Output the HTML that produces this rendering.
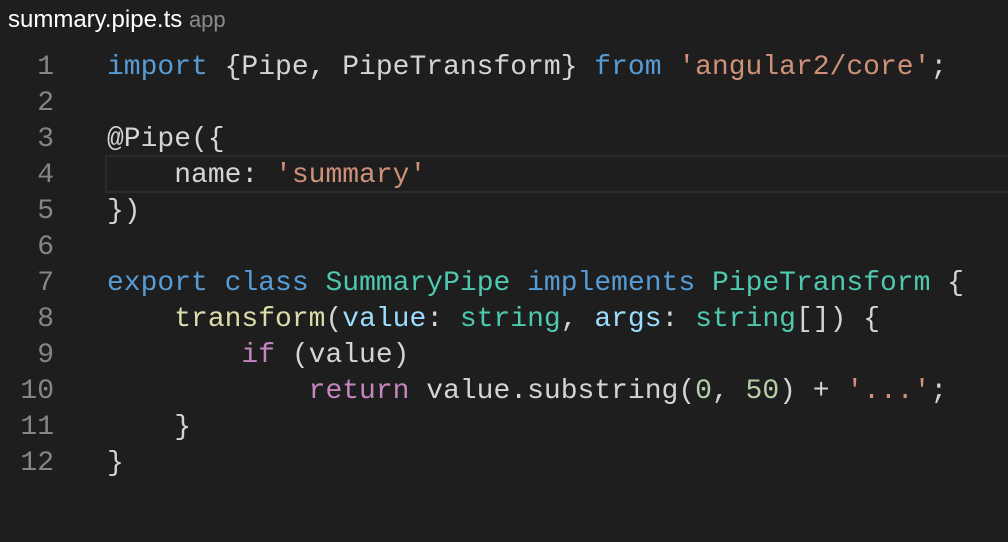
<!DOCTYPE html>
<html><head><style>
body{margin:0;width:1008px;height:542px;background:#1e1e1e;overflow:hidden;position:relative}
.h{position:absolute;left:8px;top:6px;font-family:"Liberation Sans",sans-serif;font-size:24px;color:#fff;white-space:nowrap}
.h span{color:#8a8a8a;font-size:22px}
.hl{position:absolute;left:105px;top:155px;width:910px;height:34px;border:2px solid #2b2b2b}
.code{position:absolute;left:0;top:50px;width:1008px;font-family:"Liberation Mono",monospace;font-size:28px;line-height:36px;color:#d4d4d4}
.l{height:36px;position:relative;white-space:pre}
.n{position:absolute;left:0;width:54px;text-align:right;color:#858585}
.t{position:absolute;left:107px}
.k{color:#569cd6}.s{color:#ce9178}.ty{color:#4ec9b0}.f{color:#dcdcaa}.p{color:#9cdcfe}.c{color:#c586c0}.nu{color:#b5cea8}
</style></head><body>
<div class="h">summary.pipe.ts <span>app</span></div>
<div class="hl"></div>
<div class="code"><div class="l"><span class="n">1</span><span class="t"><span class="k">import</span> {Pipe, PipeTransform} <span class="k">from</span> <span class="s">'angular2/core'</span>;</span></div><div class="l"><span class="n">2</span></div><div class="l"><span class="n">3</span><span class="t">@Pipe({</span></div><div class="l"><span class="n">4</span><span class="t">    name: <span class="s">'summary'</span></span></div><div class="l"><span class="n">5</span><span class="t">})</span></div><div class="l"><span class="n">6</span></div><div class="l"><span class="n">7</span><span class="t"><span class="k">export</span> <span class="k">class</span> <span class="ty">SummaryPipe</span> <span class="k">implements</span> <span class="ty">PipeTransform</span> {</span></div><div class="l"><span class="n">8</span><span class="t">    <span class="f">transform</span>(<span class="p">value</span>: <span class="ty">string</span>, <span class="p">args</span>: <span class="ty">string</span>[]) {</span></div><div class="l"><span class="n">9</span><span class="t">        <span class="c">if</span> (value)</span></div><div class="l"><span class="n">10</span><span class="t">            <span class="c">return</span> value.substring(<span class="nu">0</span>, <span class="nu">50</span>) + <span class="s">'...'</span>;</span></div><div class="l"><span class="n">11</span><span class="t">    }</span></div><div class="l"><span class="n">12</span><span class="t">}</span></div></div>
</body></html>
